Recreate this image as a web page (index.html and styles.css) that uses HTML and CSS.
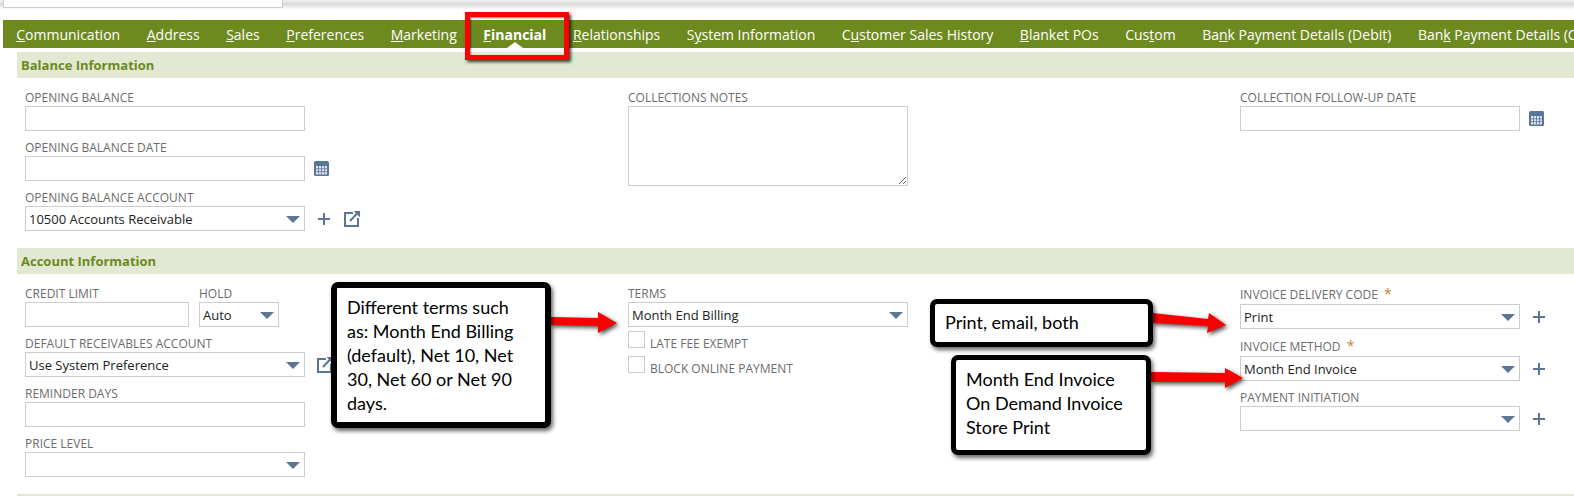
FILE: index.html
```html
<!DOCTYPE html>
<html lang="en">
<head>
<meta charset="utf-8">
<title>Financial</title>
<link rel="stylesheet" href="styles.css">
</head>
<body>
<div class="page">
  <div class="topstrip"><div class="topbox"></div></div>

  <nav class="tabs">
    <a class="tab"><u>C</u>ommunication</a>
    <a class="tab"><u>A</u>ddress</a>
    <a class="tab"><u>S</u>ales</a>
    <a class="tab"><u>P</u>references</a>
    <a class="tab"><u>M</u>arketing</a>
    <a class="tab active"><u>F</u>inancial</a>
    <a class="tab"><u>R</u>elationships</a>
    <a class="tab">S<u>y</u>stem Information</a>
    <a class="tab">C<u>u</u>stomer Sales History</a>
    <a class="tab"><u>B</u>lanket POs</a>
    <a class="tab">Cus<u>t</u>om</a>
    <a class="tab">Ba<u>n</u>k Payment Details (Debit)</a>
    <a class="tab">Ban<u>k</u> Payment Details (Credit)</a>
  </nav>

  <section class="section">
    <h2 class="section-title">Balance Information</h2>
    <div class="columns">
      <div class="col">
        <div class="field">
          <label class="label">OPENING BALANCE</label>
          <div class="row"><input class="input" type="text"></div>
        </div>
        <div class="field">
          <label class="label">OPENING BALANCE DATE</label>
          <div class="row">
            <input class="input" type="text">
            <svg class="icon cal" viewBox="0 0 15 15"><rect width="15" height="15" rx="1.5" fill="#5b7597"/><path d="M2 5h11v8.500H2z" fill="#dfe5ee"/><path d="M4.500 5v8.500M7.500 5v8.500M10.500 5v8.500M2 7.800h11M2 10.600h11" stroke="#5b7597" stroke-width=".8"/></svg>
          </div>
        </div>
        <div class="field">
          <label class="label">OPENING BALANCE ACCOUNT</label>
          <div class="row">
            <div class="select">10500 Accounts Receivable<i class="caret"></i></div>
            <svg class="icon plus" viewBox="0 0 12 12"><path d="M6 0v12M0 6h12" stroke="#5b7597" stroke-width="2"/></svg>
            <svg class="icon ext" viewBox="0 0 16 16"><path d="M9 2H1v13h13V7" fill="none" stroke="#5b7597" stroke-width="2"/><path d="M6 10l7-7.500" stroke="#5b7597" stroke-width="2" fill="none"/><path d="M9.500 0H16v6.500z" fill="#5b7597"/></svg>
          </div>
        </div>
      </div>

      <div class="col">
        <div class="field">
          <label class="label">COLLECTIONS NOTES</label>
          <textarea class="textarea"></textarea>
        </div>
      </div>

      <div class="col">
        <div class="field">
          <label class="label">COLLECTION FOLLOW-UP DATE</label>
          <div class="row">
            <input class="input" type="text">
            <svg class="icon cal" viewBox="0 0 15 15"><rect width="15" height="15" rx="1.5" fill="#5b7597"/><path d="M2 5h11v8.500H2z" fill="#dfe5ee"/><path d="M4.500 5v8.500M7.500 5v8.500M10.500 5v8.500M2 7.800h11M2 10.600h11" stroke="#5b7597" stroke-width=".8"/></svg>
          </div>
        </div>
      </div>
    </div>
  </section>

  <section class="section">
    <h2 class="section-title">Account Information</h2>
    <div class="columns">
      <div class="col">
        <div class="field-pair">
          <div class="field">
            <label class="label">CREDIT LIMIT</label>
            <input class="input short" type="text">
          </div>
          <div class="field">
            <label class="label">HOLD</label>
            <div class="select tiny">Auto<i class="caret"></i></div>
          </div>
        </div>
        <div class="field">
          <label class="label">DEFAULT RECEIVABLES ACCOUNT</label>
          <div class="row">
            <div class="select">Use System Preference<i class="caret"></i></div>
            <svg class="icon ext solo" viewBox="0 0 16 16"><path d="M9 2H1v13h13V7" fill="none" stroke="#5b7597" stroke-width="2"/><path d="M6 10l7-7.500" stroke="#5b7597" stroke-width="2" fill="none"/><path d="M9.500 0H16v6.500z" fill="#5b7597"/></svg>
          </div>
        </div>
        <div class="field">
          <label class="label">REMINDER DAYS</label>
          <input class="input" type="text">
        </div>
        <div class="field">
          <label class="label">PRICE LEVEL</label>
          <div class="select"><i class="caret"></i></div>
        </div>
      </div>

      <div class="col">
        <div class="field">
          <label class="label">TERMS</label>
          <div class="select">Month End Billing<i class="caret"></i></div>
        </div>
        <div class="check-row"><span class="check"></span><span class="check-label">LATE FEE EXEMPT</span></div>
        <div class="check-row"><span class="check"></span><span class="check-label">BLOCK ONLINE PAYMENT</span></div>
      </div>

      <div class="col">
        <div class="field req first">
          <label class="label starred">INVOICE DELIVERY CODE <span class="star">*</span></label>
          <div class="row">
            <div class="select">Print<i class="caret"></i></div>
            <svg class="icon plus" viewBox="0 0 12 12"><path d="M6 0v12M0 6h12" stroke="#5b7597" stroke-width="2"/></svg>
          </div>
        </div>
        <div class="field req">
          <label class="label starred">INVOICE METHOD <span class="star">*</span></label>
          <div class="row">
            <div class="select">Month End Invoice<i class="caret"></i></div>
            <svg class="icon plus" viewBox="0 0 12 12"><path d="M6 0v12M0 6h12" stroke="#5b7597" stroke-width="2"/></svg>
          </div>
        </div>
        <div class="field">
          <label class="label">PAYMENT INITIATION</label>
          <div class="row">
            <div class="select"><i class="caret"></i></div>
            <svg class="icon plus" viewBox="0 0 12 12"><path d="M6 0v12M0 6h12" stroke="#5b7597" stroke-width="2"/></svg>
          </div>
        </div>
      </div>
    </div>
  </section>

  <div class="footer-band"></div>

  <div class="redbox"></div>

  <svg class="arrows" viewBox="0 0 1574 496">
    <polygon points="550,317 598,318 598,312 617,323 598,333 598,326 550,325"/>
    <polygon points="1152,313 1208,319 1209,313 1226,325 1207,333 1208,326 1152,323"/>
    <polygon points="1150,372 1225,373 1225,368 1243,378 1225,388 1225,382 1150,382"/>
  </svg>

  <div class="callout c1">Different terms such<br>as: Month End Billing<br>(default), Net 10, Net<br>30, Net 60 or Net 90<br>days.</div>
  <div class="callout c2">Print, email, both</div>
  <div class="callout c3">Month End Invoice<br>On Demand Invoice<br>Store Print</div>
</div>
</body>
</html>
```

FILE: styles.css
```css
* { box-sizing: border-box; }
html, body { margin: 0; padding: 0; background: #fff; }
body { width: 1574px; height: 496px; overflow: hidden; font-family: "Open Sans", "Liberation Sans", sans-serif; }
.page { position: relative; width: 1574px; height: 496px; overflow: hidden; }

.topstrip { height: 20px; background: linear-gradient(#f2f2f2 0, #e6e6e6 2px, #d9d9d9 4px, #f4f4f4 8px, #fff 10px) no-repeat; background-size: 100% 10px; }
.topbox { width: 280px; height: 8px; margin-left: 3px; background: #fff; border: 1px solid #ccc; border-top: 0; }

.tabs { display: flex; height: 28px; margin: 0 0 4px 3px; background: #6e8a1f; white-space: nowrap; overflow: hidden; }
.tab { position: relative; flex: none; height: 28px; padding: 0 13.27px; line-height: 30px; font-size: 14px; color: #fff; }
.tab.active { font-weight: 700; }
.tab.active::after { content: ""; position: absolute; left: 50%; bottom: 0; margin-left: -8px; border: 8px solid transparent; border-top: 0; border-bottom: 6px solid #fff; }

.section { margin-left: 17px; margin-bottom: 8px; }
.section-title { margin: 0; height: 26px; padding-left: 4px; background: #e3e8d3; color: #6b8a1f; font-size: 13px; font-weight: 700; line-height: 26px; }
.columns { display: grid; grid-template-columns: 603px 612px 1fr; padding: 12px 0 0 8px; }

.field { margin-bottom: 9px; }
.field.req { margin-bottom: 9px; }
.field.req.first { margin-bottom: 9px; }
.label { display: block; height: 16px; font-size: 12px; line-height: 16px; color: #6c6c6c; white-space: nowrap; }
.label.starred { height: 18px; line-height: 16px; }
.star { margin-left: 3px; color: #c48a2c; font-size: 14px; }
.row { display: flex; align-items: center; height: 25px; }
.field-pair { display: flex; gap: 10px; }

.input, .select, .textarea { display: block; width: 280px; height: 25px; margin: 0; padding: 0 3px; border: 1px solid #ccc; border-radius: 0; background: #fff; outline: 0; }
.input.short { width: 164px; }
.select { position: relative; flex: none; font-size: 13px; line-height: 24px; color: #222; white-space: nowrap; }
.select.tiny { width: 80px; }
.textarea { height: 80px; resize: both; }
.caret { position: absolute; top: 9px; right: 4px; width: 0; height: 0; border-style: solid; border-width: 7px 7px 0; border-color: #5b7597 transparent transparent; }

.icon { flex: none; display: block; }
.cal { width: 15px; height: 15px; margin-left: 9px; }
.plus { width: 12px; height: 12px; margin-left: 13px; }
.ext { width: 16px; height: 16px; margin-left: 14px; }
.ext.solo { margin-left: 12px; }

.check-row { display: flex; height: 25px; margin-top: -5px; margin-bottom: 5px; }
.check { flex: none; width: 17px; height: 17px; border: 1px solid #ccc; background: #fff; }
.check-label { margin: 5px 0 0 5px; font-size: 12px; line-height: 16px; color: #6c6c6c; white-space: nowrap; }

.footer-band { position: absolute; left: 17px; right: 0; top: 494px; height: 2px; background: #e3e8d3; }

.redbox { position: absolute; left: 465px; top: 12px; width: 104px; height: 48px; border: 5px solid #f00; box-shadow: 2px 2px 3px rgba(0,0,0,.75), inset 1px 1px 2px rgba(0,0,0,.5); }
.arrows { position: absolute; left: 0; top: 0; width: 1574px; height: 496px; fill: #f80000; filter: drop-shadow(2px 2px 2px rgba(0,0,0,.7)); pointer-events: none; }

.callout { position: absolute; padding-left: 10px; background: #fff; border: 6px solid #000; border-radius: 7px; box-shadow: 2px 3px 4px rgba(0,0,0,.6); font-family: Lato, "Liberation Sans", sans-serif; font-size: 18px; line-height: 24px; color: #000; white-space: nowrap; }
.c1 { left: 331px; top: 282px; width: 220px; height: 146px; padding-top: 7px; }
.c2 { left: 930px; top: 299px; width: 223px; height: 48px; padding-top: 6px; border-width: 5px; }
.c3 { left: 951px; top: 355px; width: 200px; height: 100px; padding-top: 7px; border-width: 5px; }
```
